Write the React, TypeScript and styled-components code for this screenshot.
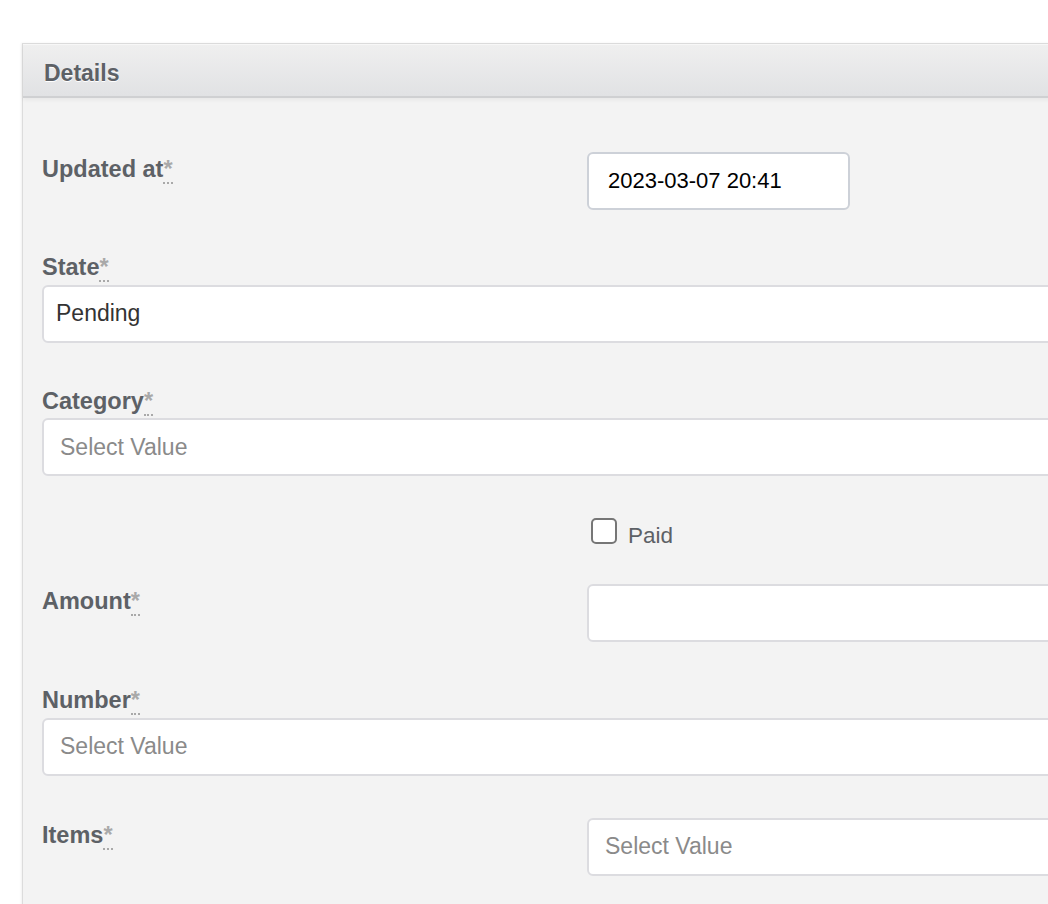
import React from "react";
import styled, { createGlobalStyle } from "styled-components";

const Global = createGlobalStyle`
  html, body { margin: 0; padding: 0; background: #ffffff; }
  body { font-family: "Liberation Sans", Arial, Helvetica, sans-serif; overflow: hidden; }
  * { box-sizing: border-box; }
`;

const Page = styled.div`
  width: 1048px;
  height: 904px;
  overflow: hidden;
  padding: 43px 0 0 22px;
`;

const Panel = styled.section`
  width: 1200px;
  min-height: 900px;
  background: #f3f3f3;
  border: 1px solid #dcdcdc;
  border-right: none;
  box-shadow: -1px 0 2px rgba(0, 0, 0, 0.06);
`;

const PanelHeader = styled.header`
  height: 54px;
  display: flex;
  align-items: center;
  padding: 6px 0 0 21px;
  background: linear-gradient(#efefef, #e1e2e4);
  border-top: 1px solid #f7f7f7;
  border-bottom: 2px solid #cfd0d2;
  box-shadow: 0 2px 4px rgba(0, 0, 0, 0.05);
  font-size: 23px;
  font-weight: bold;
  color: #5d6166;
  text-shadow: 0 1px 0 #ffffff;
`;

const Body = styled.div`
  display: flex;
  flex-direction: column;
  padding: 0 20px 0 19px;
`;

const InlineRow = styled.div<{ $mt: number }>`
  display: grid;
  grid-template-columns: 545px 1fr;
  align-items: start;
  margin-top: ${(p) => p.$mt}px;
`;

const StackRow = styled.div<{ $mt: number }>`
  display: flex;
  flex-direction: column;
  margin-top: ${(p) => p.$mt}px;
`;

const Label = styled.label<{ $inline?: boolean }>`
  display: block;
  font-size: 23.5px;
  line-height: 27.6px;
  font-weight: bold;
  color: #5d6166;
  margin: ${(p) => (p.$inline ? "4px 0 0 0" : "0 0 3px 0")};
`;

const Req = styled.abbr`
  color: #a9a9a9;
  text-decoration: none;
  border-bottom: 2px dotted #a9a9a9;
  font-weight: bold;
`;

const Input = styled.div<{ $width?: number; $placeholder?: boolean; $dark?: boolean; $pl?: number }>`
  height: 58px;
  width: ${(p) => (p.$width ? `${p.$width}px` : "100%")};
  display: flex;
  align-items: center;
  padding-left: ${(p) => p.$pl ?? 16}px;
  background: #ffffff;
  border: 2px solid ${(p) => (p.$dark ? "#cdd1d8" : "#dcdce0")};
  border-radius: 6px;
  font-size: ${(p) => (p.$dark ? 22 : 23)}px;
  color: ${(p) => (p.$placeholder ? "#8a8a8a" : p.$dark ? "#000000" : "#333333")};
`;

const CheckRow = styled.div<{ $mt: number }>`
  display: grid;
  grid-template-columns: 545px 1fr;
  margin-top: ${(p) => p.$mt}px;
`;

const CheckLabel = styled.label`
  display: flex;
  align-items: center;
  gap: 11px;
  padding-left: 4px;
  font-size: 22.5px;
  color: #5d6166;
  height: 26px;
`;

const Box = styled.span`
  width: 26px;
  height: 26px;
  border: 2px solid #767676;
  border-radius: 5px;
  background: #ffffff;
  flex: none;
`;

const PaidText = styled.span`
  position: relative;
  top: 5px;
`;

const Star = () => <Req title="required">*</Req>;

export default function App() {
  return (
    <>
      <Global />
      <Page>
        <Panel>
          <PanelHeader>Details</PanelHeader>
          <Body>
            <InlineRow $mt={54}>
              <Label $inline>
                Updated at<Star />
              </Label>
              <Input $width={263} $dark $pl={19}>
                2023-03-07 20:41
              </Input>
            </InlineRow>

            <StackRow $mt={44}>
              <Label>
                State<Star />
              </Label>
              <Input $pl={12}>Pending</Input>
            </StackRow>

            <StackRow $mt={45}>
              <Label>
                Category<Star />
              </Label>
              <Input $placeholder>Select Value</Input>
            </StackRow>

            <CheckRow $mt={42}>
              <span />
              <CheckLabel>
                <Box />
                <PaidText>Paid</PaidText>
              </CheckLabel>
            </CheckRow>

            <InlineRow $mt={40}>
              <Label $inline>
                Amount<Star />
              </Label>
              <Input />
            </InlineRow>

            <StackRow $mt={45}>
              <Label>
                Number<Star />
              </Label>
              <Input $placeholder>Select Value</Input>
            </StackRow>

            <InlineRow $mt={42}>
              <Label $inline>
                Items<Star />
              </Label>
              <Input $placeholder>Select Value</Input>
            </InlineRow>
          </Body>
        </Panel>
      </Page>
    </>
  );
}
